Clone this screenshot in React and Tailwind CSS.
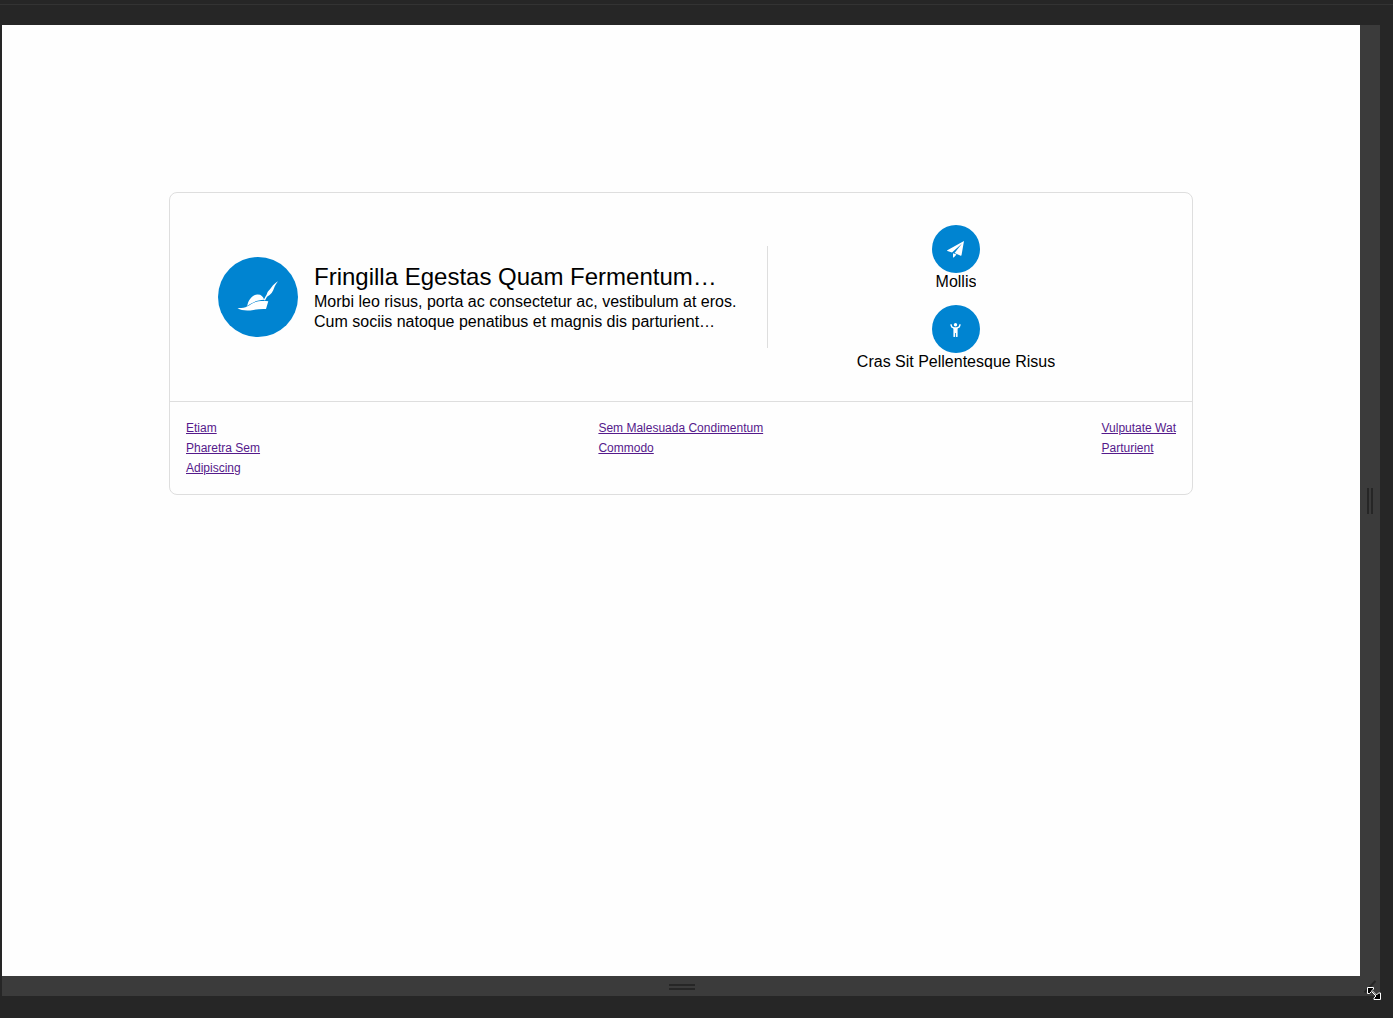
const linkGroups = [
  ['Etiam', 'Pharetra Sem', 'Adipiscing'],
  ['Sem Malesuada Condimentum', 'Commodo'],
  ['Vulputate Wat', 'Parturient'],
];

function HatIcon() {
  return (
    <svg viewBox="0 0 40 30" className="w-10 overflow-visible fill-white" aria-hidden="true">
      <path d="M9.200 24C10 18.500 14 12.700 19.500 12.500c3.700-.1 5.500 2 6.700 5.200-6.700.2-11.300 2.200-17 6.300z" />
      <path d="M-.5 26c4 .1 7-.2 10-1.800 1.500-.6 2.500-1.300 3.800-2.200 4.500-2.800 9.700-3.300 17-2.800l-2.300 7.800c-4-.3-8 .1-12.500.9-5.500 1-12 1-16-1.900z" />
      <path d="M25.700 18l1.800-3.500c1.400-1.400 1.300-3.200 2.300-4.700 1-1.600 2.500-2.800 3.700-4.600C35 3 37.500.8 40-.8c-1.800 2.300-3.200 4.500-4 7-.8 3-3.200 6.500-7 8.600l-2 3.600z" />
    </svg>
  );
}

function PlaneIcon(props) {
  return (
    <svg viewBox="0 0 16 16" fill="currentColor" {...props}>
      <path d="M16 0L-.7 9.200c-.4.3-.3.700.1.900L4 11.400 14 2.500 6.500 12l6.200 2.700c.4.100.7 0 .8-.4z" />
      <path d="M5 12.200v3.700c0 .6.600.8 1 .3l2.500-2.700z" />
    </svg>
  );
}

function PersonIcon(props) {
  return (
    <svg viewBox="0 0 16 16" fill="none" stroke="currentColor" strokeLinecap="round" strokeLinejoin="round" {...props}>
      <circle cx="7.500" cy="3.800" r="1.700" fill="currentColor" stroke="none" />
      <path d="M3 3.800l.7 2 2.500 1.400h2.600l2.500-1.400.7-2" strokeWidth="1.400" />
      <path d="M5.400 6.500h4.200v8.900c0 .5-.4.700-.8.700h-.4c-.3 0-.5-.2-.5-.5V12h-.8v3.600c0 .3-.2.500-.5.500h-.4c-.4 0-.8-.2-.8-.7z" fill="currentColor" stroke="none" />
    </svg>
  );
}

function Action({ icon: Icon, label }) {
  return (
    <div className="flex w-full flex-col items-center">
      <span className="flex size-12 items-center justify-center rounded-full bg-[#0084d1] text-white">
        <Icon className="size-4 overflow-visible" aria-hidden="true" />
      </span>
      <span className="h-4 overflow-hidden text-base leading-[18px]">{label}</span>
    </div>
  );
}

function Card() {
  return (
    <article className="mx-auto max-w-5xl rounded-lg border border-[#dedede]">
      <div className="flex items-center px-12 py-8">
        <div className="flex flex-1 items-center gap-4 border-r border-[#dedede] py-[11px] pr-6">
          <span className="flex size-20 shrink-0 items-center justify-center rounded-full bg-[#0084d1]">
            <HatIcon />
          </span>
          <div className="min-w-0">
            <h1 className="text-2xl leading-[30px]">Fringilla Egestas Quam Fermentum…</h1>
            <p className="text-base leading-5">
              Morbi leo risus, porta ac consectetur ac, vestibulum at eros.
              <br />
              Cum sociis natoque penatibus et magnis dis parturient…
            </p>
          </div>
        </div>
        <div className="flex w-94 flex-col gap-4">
          <Action icon={PlaneIcon} label="Mollis" />
          <Action icon={PersonIcon} label="Cras Sit Pellentesque Risus" />
        </div>
      </div>
      <footer className="flex justify-between border-t border-[#dedede] p-4 text-xs leading-5">
        {linkGroups.map((group) => (
          <ul key={group[0]}>
            {group.map((label) => (
              <li key={label}>
                <a href="#" className="text-[#551a8b] underline">{label}</a>
              </li>
            ))}
          </ul>
        ))}
      </footer>
    </article>
  );
}

function ResizeCursor() {
  return (
    <svg viewBox="0 0 20 20" className="absolute right-0 bottom-0 size-5 overflow-visible" aria-hidden="true">
      <path d="M4.500 16.500L15.500 5" stroke="#262626" strokeWidth="2" />
      <path d="M7.500 11.500h6v1.500l-1.500 1.500 4.500 4.500 2-2h2v6.500h-6.500v-1.500l2-2-4.500-4.500-2 2h-2z" fill="#000" stroke="#fff" strokeWidth="1" />
    </svg>
  );
}

export default function App() {
  return (
    <div className="flex h-screen flex-col overflow-hidden bg-[#262626] font-['Liberation_Sans',Arial,sans-serif] text-black">
      <div className="h-1 shrink-0" />
      <div className="h-px shrink-0 bg-[#333333]" />
      <div className="mt-5 mr-[13px] mb-[22px] ml-0.5 grid min-h-0 flex-1 grid-cols-[1fr_20px] grid-rows-[1fr_20px] bg-[#3b3b3b]">
        <main className="overflow-hidden bg-[#fefefe] pt-[167px]">
          <Card />
        </main>
        <div className="flex items-center justify-center gap-0.5">
          <span className="h-[26px] w-0.5 bg-[#262626]" />
          <span className="h-[26px] w-0.5 bg-[#262626]" />
        </div>
        <div className="flex flex-col items-center justify-center gap-0.5 pt-0.5 pl-0.5">
          <span className="h-0.5 w-[26px] bg-[#262626]" />
          <span className="h-0.5 w-[26px] bg-[#262626]" />
        </div>
        <div className="relative">
          <ResizeCursor />
        </div>
      </div>
    </div>
  );
}
